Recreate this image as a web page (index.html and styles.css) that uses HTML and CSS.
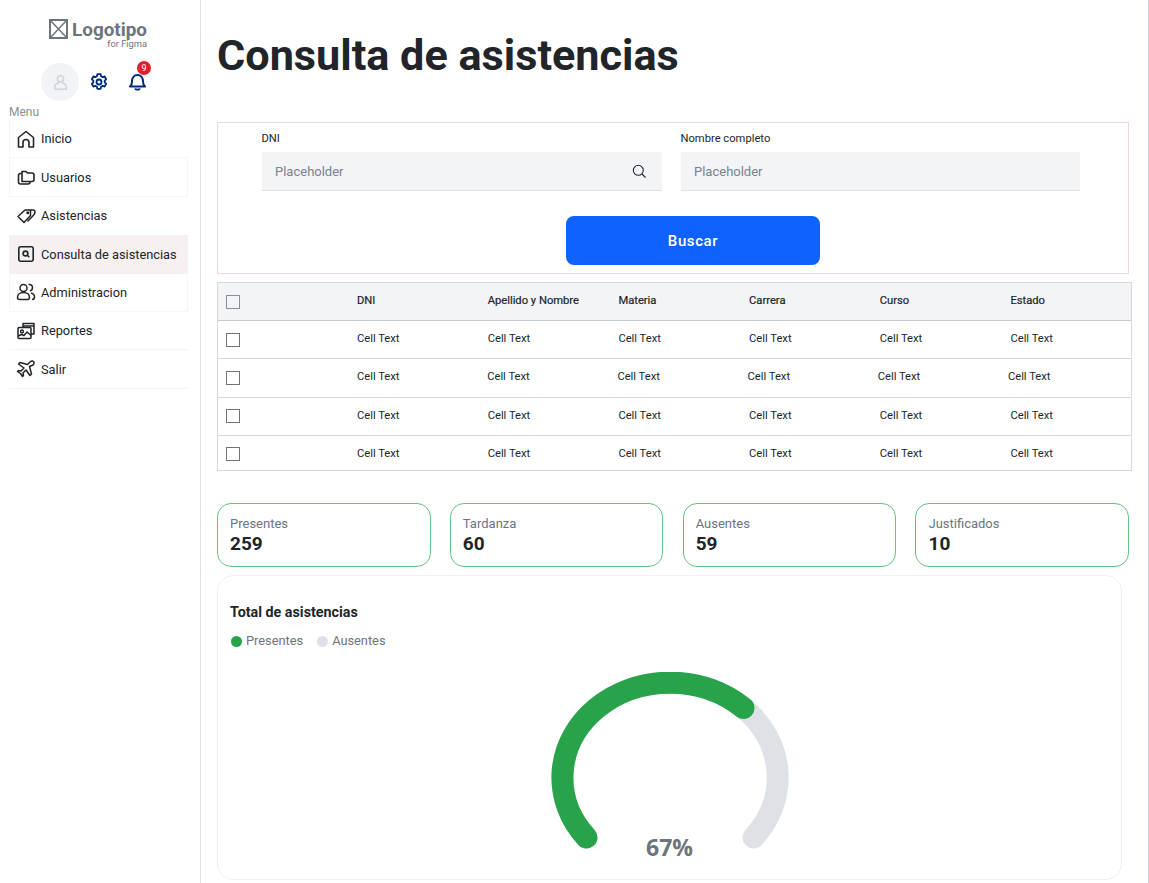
FILE: index.html
```html
<!DOCTYPE html>
<html lang="es">
<head>
  <meta charset="UTF-8" />
  <title>Consulta de asistencias</title>
  <link rel="stylesheet" href="styles.css">
</head>
<body>

<div class="page">
  <aside class="sidebar">
    <div class="logo">
      <svg class="logo-mark" width="19" height="20" viewBox="0 0 19 20" fill="none" stroke="#6c757d" stroke-width="2"><rect x="1" y="1" width="17" height="18"/><path d="M1 1l17 18M18 1L1 19" stroke-width="1.500"/></svg>
      <div class="logo-text">
        <div class="logo-name">Logotipo</div>
        <div class="logo-sub">for Figma</div>
      </div>
    </div>

    <div class="tools">
      <div class="avatar">
        <svg width="13" height="17" viewBox="0 0 16 20" fill="none" stroke="#ced4da" stroke-width="1.900"><circle cx="8" cy="5.500" r="3.800"/><path d="M5.500 9.500v1.200c-2.400.6-4.500 1.800-4.500 4.300v3.300h14V15c0-2.500-2.100-3.700-4.500-4.300V9.500"/></svg>
      </div>
      <svg class="tool-gear" width="18" height="18" viewBox="0 0 18 18" fill="none" stroke="#002b7a" stroke-width="1.800"><path d="M7.400 1.200h3.200l.5 2.100 1.500.8 2-.7 1.600 2.800-1.500 1.400v1.700l1.500 1.500-1.600 2.800-2-.7-1.500.8-.5 2.100H7.400l-.5-2.100-1.500-.8-2 .7-1.600-2.800 1.500-1.500V7.600L1.800 6.200l1.600-2.800 2 .7 1.500-.8z" stroke-linejoin="round"/><circle cx="9" cy="9" r="2.500"/></svg>
      <div class="bell">
        <svg width="17" height="18" viewBox="0 0 17 18" fill="none" stroke="#002b7a" stroke-width="2"><path d="M1 13.500c1.500-1.300 2-2.700 2-5C3 5 5 2 8.500 2S14 5 14 8.500c0 2.300.5 3.700 2 5z" stroke-linejoin="round"/><path d="M6 15.500c.5 1.500 4.500 1.500 5 0"/></svg>
        <span class="badge">9</span>
      </div>
    </div>

    <div class="menu-label">Menu</div>
    <nav class="menu">
      <a class="menu-item item-first">
        <svg width="20" height="20" viewBox="0 0 20 20" fill="none" stroke="#212529" stroke-width="1.600" stroke-linejoin="round"><path d="M2.500 8.500L10 2.500l7.500 6V18h-4.500v-4.500a3 3 0 0 0-6 0V18H2.500z"/></svg>
        Inicio
      </a>
      <a class="menu-item item-boxed">
        <svg width="20" height="20" viewBox="0 0 20 20" fill="none" stroke="#212529" stroke-width="1.600" stroke-linejoin="round"><path d="M6 4.500h4l1.500 1.500H16a2 2 0 0 1 2 2v4.500a2 2 0 0 1-2 2H6z"/><path d="M6 6.500H4.500a2 2 0 0 0-2 2V15a2 2 0 0 0 2 2H12a2 2 0 0 0 2-2v-.5"/></svg>
        Usuarios
      </a>
      <a class="menu-item">
        <svg width="20" height="20" viewBox="0 0 20 20" fill="none" stroke="#212529" stroke-width="1.500" stroke-linejoin="round"><path d="M2 10.500L9 4h5.500v5.500L8 16.500z"/><path d="M14.500 4h2.500a2 2 0 0 1 2 2c0 1.200-.5 2.300-1.500 3.300L11.500 15.500"/><circle cx="11.800" cy="6.800" r=".8"/></svg>
        Asistencias
      </a>
      <a class="menu-item item-active">
        <svg width="20" height="20" viewBox="0 0 20 20" fill="none" stroke="#212529" stroke-width="1.600"><rect x="2.800" y="2.800" width="14.400" height="14.400" rx="2"/><circle cx="9.500" cy="9.500" r="2.400"/><path d="M11.300 11.300l2 2"/></svg>
        Consulta de asistencias
      </a>
      <a class="menu-item item-boxed">
        <svg width="20" height="20" viewBox="0 0 20 20" fill="none" stroke="#212529" stroke-width="1.500"><circle cx="7.500" cy="6" r="3.500"/><path d="M1.500 15.500c0-3 2.500-5 6-5s6 2 6 5c0 1.300-1 2-2 2h-8c-1 0-2-.7-2-2z"/><path d="M12.500 2.500c2.500-.5 4 1 4 3s-1 3-2.500 3.500M15 11c2 .5 3.500 2 3.500 4 0 1.300-1 2.500-2.500 2.500"/></svg>
        Administracion
      </a>
      <a class="menu-item item-line">
        <svg width="20" height="20" viewBox="0 0 20 20" fill="none" stroke="#212529" stroke-width="1.500" stroke-linejoin="round"><path d="M7 6.500V2.500h11V13h-3"/><path d="M7 5h11"/><rect x="2" y="6.500" width="13" height="11" rx="1"/><circle cx="6" cy="10.500" r="1.400"/><path d="M2 15l3.500-1.500 2.500 1 3-3.500 4 3.500"/></svg>
        Reportes
      </a>
      <a class="menu-item item-line">
        <svg width="20" height="20" viewBox="0 0 20 20" fill="none" stroke="#212529" stroke-width="1.500" stroke-linejoin="round"><path d="M17.500 2.500c-1-1-2.500-.5-3.500.5l-2.500 2.500L4 3.500 2.500 5l5.500 4-3 3-2.500-.5-1 1 3 2 2 3 1-1-.5-2.500 3-3 4 5.500 1.500-1.500-2-7.500L17 6c1-1 1.500-2.500.5-3.500z"/></svg>
        Salir
      </a>
    </nav>
  </aside>

  <main class="main">
    <h1 class="title">Consulta de asistencias</h1>

    <section class="search">
      <div class="search-fields">
        <div class="field">
          <label class="field-label">DNI</label>
          <div class="field-input">
            <span>Placeholder</span>
            <svg width="16" height="16" viewBox="0 0 16 16" fill="none" stroke="#212529" stroke-width="1.100"><circle cx="7.300" cy="7.300" r="5"/><path d="M11 11l3.500 3.500"/></svg>
          </div>
        </div>
        <div class="field field-corto">
          <label class="field-label">Nombre completo</label>
          <div class="field-input"><span>Placeholder</span></div>
        </div>
      </div>
      <button class="search-btn">Buscar</button>
    </section>

    <section class="tabla">
      <div class="fila fila-head">
        <span class="check"></span>
        <span>DNI</span><span>Apellido y Nombre</span><span>Materia</span><span>Carrera</span><span>Curso</span><span>Estado</span>
      </div>
      <div class="fila">
        <span class="check"></span>
        <span>Cell Text</span><span>Cell Text</span><span>Cell Text</span><span>Cell Text</span><span>Cell Text</span><span>Cell Text</span>
      </div>
      <div class="fila fila-angosta">
        <span class="check"></span>
        <span>Cell Text</span><span>Cell Text</span><span>Cell Text</span><span>Cell Text</span><span>Cell Text</span><span>Cell Text</span>
      </div>
      <div class="fila">
        <span class="check"></span>
        <span>Cell Text</span><span>Cell Text</span><span>Cell Text</span><span>Cell Text</span><span>Cell Text</span><span>Cell Text</span>
      </div>
      <div class="fila fila-ultima">
        <span class="check"></span>
        <span>Cell Text</span><span>Cell Text</span><span>Cell Text</span><span>Cell Text</span><span>Cell Text</span><span>Cell Text</span>
      </div>
    </section>

    <section class="stats">
      <div class="stat"><div class="stat-label">Presentes</div><div class="stat-num">259</div></div>
      <div class="stat"><div class="stat-label">Tardanza</div><div class="stat-num">60</div></div>
      <div class="stat"><div class="stat-label">Ausentes</div><div class="stat-num">59</div></div>
      <div class="stat"><div class="stat-label">Justificados</div><div class="stat-num">10</div></div>
    </section>

    <section class="chart">
      <h2 class="chart-title">Total de asistencias</h2>
      <div class="legend">
        <span class="legend-item"><i class="dot dot-green"></i>Presentes</span>
        <span class="legend-item"><i class="dot dot-gray"></i>Ausentes</span>
      </div>
      <div class="gauge">
        <svg width="240" height="180" viewBox="0 0 240 180" fill="none" stroke-width="22" stroke-linecap="round">
          <path d="M36.500 165.500A107.700 95 0 1 1 203.500 165.500" stroke="#dee2e6"/>
          <path d="M36.500 165.500A107.700 95 0 0 1 193.500 36.100" stroke="#28a34a"/>
        </svg>
        <div class="gauge-value">67%</div>
      </div>
    </section>
  </main>
</div>

</body>
</html>
```

FILE: styles.css
```css
* { box-sizing: border-box; }
html, body { margin: 0; height: 883px; overflow: hidden; }
body { font-family: 'Roboto', sans-serif; background-color: #fff; color: #212529; }

.page { display: flex; width: 1149px; height: 883px; }

/* sidebar */
.sidebar { width: 201px; flex-shrink: 0; border-right: 1px solid #dee2e6; padding: 19px 12px 0 9px; }
.logo { display: flex; gap: 4px; padding-left: 40px; height: 40px; }
.logo-text { margin-top: 3px; }
.logo-name { font-size: 18.900px; font-weight: 700; line-height: 16px; color: #6c757d; }
.logo-sub { font-size: 9.300px; line-height: 11px; color: #6c757d; text-align: right; }
.tools { display: flex; align-items: center; padding-left: 32px; height: 38px; margin-top: 4px; }
.avatar { width: 38px; height: 38px; border-radius: 50%; background-color: #f1f3f6; display: flex; align-items: center; justify-content: center; }
.tool-gear { margin-left: 11px; }
.bell { position: relative; margin-left: 21px; height: 18px; }
.bell svg { display: block; }
.badge { position: absolute; left: 8px; top: -12px; width: 14px; height: 14px; border-radius: 50%; background-color: #e01e2e; color: #fff; font-size: 9px; line-height: 14px; text-align: center; }
.menu-label { font-size: 12px; line-height: 14px; color: #8a9097; margin-top: 4px; }
.menu { display: flex; flex-direction: column; margin-top: 1px; }
.menu-item { display: flex; align-items: center; gap: 5px; height: 38.400px; padding-left: 7px; font-size: 12.800px; font-weight: 400; color: #212529; }
.item-first { border-left: 1px solid #f6f6fa; border-bottom: 1px solid #f6f6fa; padding-left: 6px; }
.item-boxed { border: 1px solid #f6f6fa; border-top: none; padding-left: 6px; }
.item-line { border-bottom: 1px solid #f4f4f6; }
.item-active { background-color: #f7f0f0; }

/* main */
.main { flex: 1; padding: 0 0 0 16px; border-right: 1px solid #ced4da; }
.title { font-size: 43.200px; font-weight: 700; line-height: 52px; margin: 30px 0 40px; color: #212529; }

.search { width: 912px; height: 152px; border: 1px solid #eed9da; padding-top: 8px; display: flex; flex-direction: column; align-items: center; }
.search-fields { display: flex; gap: 19px; margin-right: 5px; }
.field { width: 400px; }
.field-corto { width: 399px; }
.field-label { display: block; font-size: 11.200px; line-height: 16px; color: #212529; margin-bottom: 5px; }
.field-input { height: 39px; background-color: #f2f4f8; border-bottom: 1px solid #dde1e6; padding: 0 15px 0 13.500px; display: flex; align-items: center; justify-content: space-between; font-size: 13px; color: #7b828a; }
.search-btn { width: 254px; height: 49px; margin: 25px 0 0 40px; background-color: #0f62fe; color: #fff; border: none; border-radius: 8px; font-family: inherit; font-size: 15px; font-weight: 500; letter-spacing: .6px; }

.tabla { width: 915px; margin-top: 8px; border: 1px solid #d5d9de; }
.fila { display: grid; grid-template-columns: 131px repeat(6, 130.700px); align-items: center; height: 38.400px; padding: 0 0 2px 8px; font-size: 11.200px; color: #212529; border-bottom: 1px solid #d5d9de; }
.fila-head { height: 38px; background-color: #f2f4f8; border-bottom-color: #c6ccd4; }
.fila-head span { -webkit-text-stroke: .2px #212529; }
.fila-angosta { grid-template-columns: 131px repeat(6, 130.200px); padding-bottom: 3px; }
.fila-ultima { border-bottom: none; height: 34px; padding-bottom: 0; }
.check { display: block; width: 14px; height: 14px; margin-top: 2px; border: 1px solid #6f7378; background-color: #fff; }
.fila-head .check { background-color: transparent; border-color: #8a8e93; -webkit-text-stroke: 0; }

.stats { display: flex; gap: 19.330px; width: 912px; margin-top: 32px; }
.stat { flex: 1; height: 64px; border: 1px solid #66c27f; border-radius: 14px; padding: 12px 12px 0; }
.stat-label { font-size: 13px; line-height: 15px; color: #6c757d; }
.stat-num { font-size: 19px; font-weight: 700; line-height: 24px; margin-top: 1px; color: #212529; }

.chart { width: 905px; height: 305px; margin-top: 8px; border: 1px solid #eff0f3; border-radius: 16px; padding: 28px 12px 0; }
.chart-title { font-size: 14.300px; font-weight: 700; line-height: 16px; margin: 0; color: #212529; }
.legend { display: flex; gap: 13px; margin-top: 13px; font-size: 12.800px; line-height: 16px; color: #6c757d; }
.legend-item { display: flex; align-items: center; gap: 4px; }
.dot { display: block; width: 11px; height: 11px; border-radius: 50%; margin-left: 1px; }
.dot-green { background-color: #28a34a; }
.dot-gray { background-color: #dee2e6; }
.gauge { position: relative; width: 240px; height: 180px; margin: 23px auto 0; }
.gauge svg { display: block; }
.gauge-value { position: absolute; left: 0; right: 0; top: 160px; text-align: center; font-family: 'Open Sans', sans-serif; font-size: 23px; font-weight: 700; line-height: 30px; color: #6c757d; }
```
